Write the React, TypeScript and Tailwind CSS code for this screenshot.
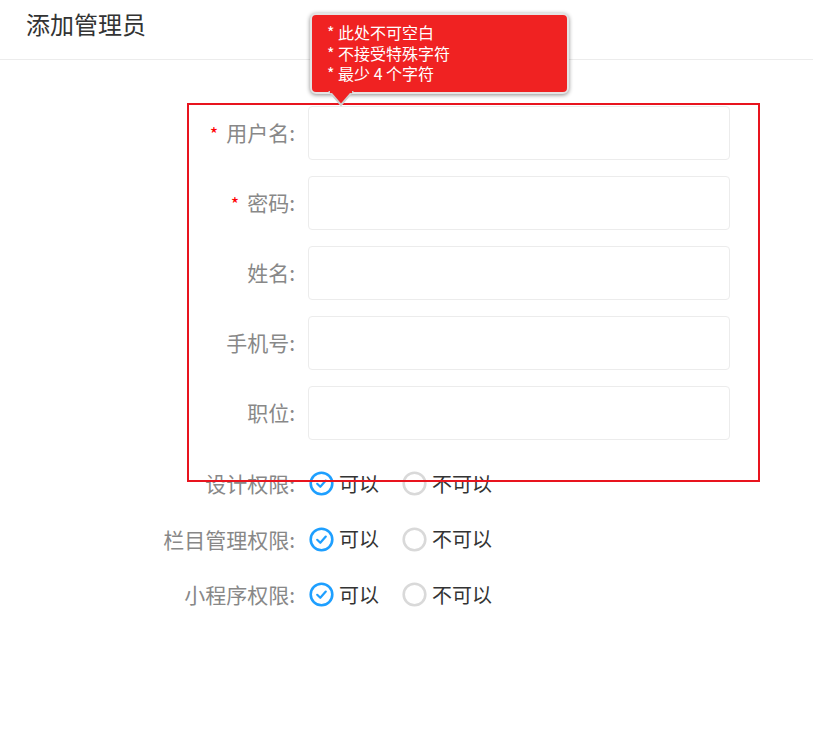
import React from "react";

const font = { fontFamily: '"Noto Sans CJK SC", "Noto Sans", sans-serif' };

const fields = [
  { label: "用户名", required: true },
  { label: "密码", required: true },
  { label: "姓名", required: false },
  { label: "手机号", required: false },
  { label: "职位", required: false },
];

const perms = ["设计权限", "栏目管理权限", "小程序权限"];

function Radio({ checked, label }: { checked: boolean; label: string }) {
  return (
    <label className="flex items-center gap-[5px]">
      {checked ? (
        <svg width="25" height="25" viewBox="0 0 25 25">
          <circle cx="12.5" cy="12.5" r="10.8" fill="white" stroke="#1e9fff" strokeWidth="2.6" />
          <path d="M8.2 12.8 L11.3 15.8 L16.8 9.6" fill="none" stroke="#1e9fff" strokeWidth="2.2" strokeLinecap="round" strokeLinejoin="round" />
        </svg>
      ) : (
        <svg width="25" height="25" viewBox="0 0 25 25">
          <circle cx="12.5" cy="12.5" r="10.8" fill="white" stroke="#d9d9d9" strokeWidth="2.6" />
        </svg>
      )}
      <span className="text-[20px] text-[#333]">{label}</span>
    </label>
  );
}

export default function App() {
  return (
    <div className="relative h-[731px] w-[813px] bg-white" style={font}>
      <div className="flex h-[60px] items-center border-b border-[#ececec] pb-[11px] pl-[26px]">
        <h1 className="text-[24px] text-[#333]">添加管理员</h1>
      </div>

      <div className="pt-[46px]">
        {fields.map((f) => (
          <div key={f.label} className="mb-[16px] flex h-[54px] items-center">
            <div className="w-[297px] pr-[2px] text-right text-[21px] text-[#888]">
              {f.required && <span className="mr-[8px] text-[18px] text-[#ff0000]">*</span>}
              {f.label}:
            </div>
            <input className="ml-[11px] h-full w-[422px] rounded-[4px] border border-[#ececec] bg-white px-3 outline-none" />
          </div>
        ))}

        <div className="mt-[7px]">
          {perms.map((p) => (
            <div key={p} className="flex h-[55.5px] items-center">
              <div className="w-[297px] pr-[2px] text-right text-[21px] text-[#888]">{p}:</div>
              <div className="ml-[12px] flex items-center gap-[23px]">
                <Radio checked label="可以" />
                <Radio checked={false} label="不可以" />
              </div>
            </div>
          ))}
        </div>
      </div>

      {/* annotation box */}
      <div className="pointer-events-none absolute left-[187px] top-[103px] h-[379px] w-[573px] border-2 border-[#e8141e]" />

      {/* tooltip */}
      <div className="absolute left-[310px] top-[13px] h-[81px] w-[259px] rounded-[6px] border-2 border-[#e4e4e4] bg-[#f02222] pl-[15px] pt-[7px] text-[16px] leading-[20.5px] text-white shadow-[0_1px_4px_rgba(0,0,0,0.45)]">
        <div>* 此处不可空白</div>
        <div>* 不接受特殊字符</div>
        <div>* 最少 4 个字符</div>
        <svg className="absolute left-[16px] top-[76px]" width="26" height="17" viewBox="0 0 26 17">
          <path d="M1 0 L13 14 L25 0" fill="#f02222" stroke="#d0d0d0" strokeWidth="2" />
          <rect x="2" y="0" width="22" height="2" fill="#f02222" />
        </svg>
      </div>
    </div>
  );
}
